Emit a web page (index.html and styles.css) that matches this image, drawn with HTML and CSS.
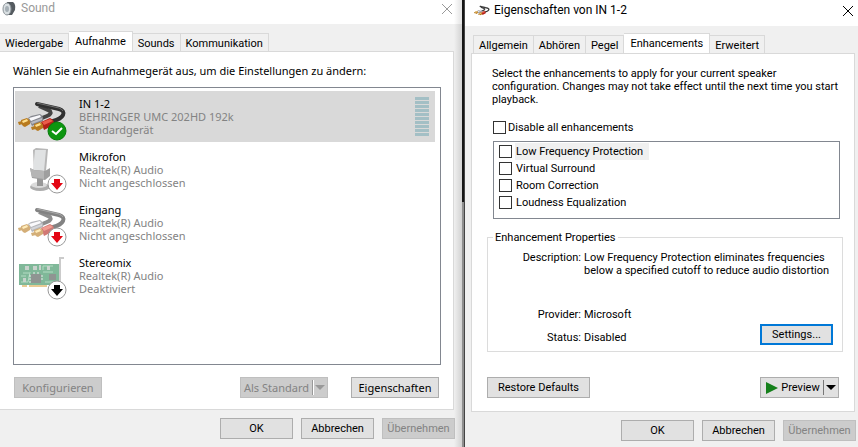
FILE: index.html
```html
<!DOCTYPE html>
<html lang="de">

<head>
    <meta charset="UTF-8">
    <meta name="viewport" content="width=device-width, initial-scale=1.0">
    <title>Sound</title>
    <link rel="stylesheet" href="styles.css">
</head>

<body>
    <svg class="symbols" aria-hidden="true">
        <symbol id="cable" viewBox="0 0 52 51">
            <path d="M24 15 L35 20 Q37 23 32 25 L27 27" fill="none" stroke="#444" stroke-width="4" />
            <path d="M22 13 L44 18 Q50 20 48 24 Q46 28 38 30" fill="none" stroke="#303030" stroke-width="4" stroke-linecap="round" />
            <path d="M22 12 L44 17 Q47 18 48 20" fill="none" stroke="#707070" />
            <path d="M13 27 L16 25 L25 23 Q29 25 28 30 L17 35 Z" fill="#85878e" />
            <path d="M14 27 L25 24 L26 26 L16 30 Z" fill="#f8f8fb" />
            <path d="M16 31 L27 27 L27 29 L17 33 Z" fill="#b9bbc2" />
            <path d="M3 31 L7 30 L8 33 L4 34 Z" fill="#b57b20" />
            <path d="M6 29 L12 27 Q16 29 15 33 L10 36 Q6 35 6 29 Z" fill="#b87a1e" />
            <path d="M7 30 L12 28 L13 30 L8 32 Z" fill="#ffe08c" />
            <path d="M26 31 L35 27 Q40 29 39 34 L29 39 Z" fill="#b32018" />
            <path d="M27 31 L35 28 L38 30 L29 34 Z" fill="#ea5c4a" />
            <path d="M16 36 L20 35 L21 38 L17 39 Z" fill="#b57b20" />
            <path d="M19 33 L25 31 Q29 33 28 37 L23 40 Q19 39 19 33 Z" fill="#b87a1e" />
            <path d="M20 34 L25 32 L26 34 L21 36 Z" fill="#ffe08c" />
        </symbol>
        <symbol id="microphone" viewBox="0 0 52 51">
            <ellipse cx="25" cy="43" rx="10" ry="4" fill="#777" />
            <ellipse cx="24" cy="41" rx="8" ry="3" fill="#c4c4c4" />
            <path d="M22 34 H28 V42 H22 Z" fill="#555" />
            <path d="M18 6 L21 4 L33 5 L31 27 L19 28 Z" fill="#888" />
            <path d="M20 6 L31 6 L29 27 L18 26 Z" fill="#cdcfd1" />
            <path d="M15 24 L19 26 L30 27 L35 24 V32 L30 36 L17 34 Z" fill="#606060" />
            <path d="M15 24 L19 26 L29 27 V35 L17 33 Z" fill="#858585" />
        </symbol>
        <symbol id="card" viewBox="0 0 52 51">
            <path d="M45 34 V8 H49" fill="none" stroke="#aaa" stroke-width="2" />
            <path d="M7 34 H12 V37 H7 Z M14 34 H32 V37 H14 Z" fill="#d9a94e" />
            <path d="M4 14 H44 V35 H4 Z" fill="#2d8a56" />
            <path d="M6 32 H13 L15 22 M8 23 H14 M28 22 H38 M30 32 H38 M28 20 V16 H38 M6 26 H11" fill="none" stroke="#83c59d" />
            <path d="M16 24 H26 V33 H16 Z M34 24 H41 V30 H34 Z" fill="#454f4a" />
            <path d="M10 16 H14 V20 H10 Z M18 16 H22 V20 H18 Z M24 15 H26 V20 H24 Z M32 16 H35 V20 H32 Z M8 28 H11 V32 H8 Z" fill="#a5b5ab" />
            <path d="M16 26 H14 M16 29 H14 M16 32 H14 M26 26 H28 M26 29 H28 M19 24 V22 M23 24 V22" stroke="#ddd" />
        </symbol>
        <symbol id="ok" viewBox="0 0 20 20">
            <circle cx="10" cy="10" r="9" fill="#0c9610" stroke="#087b0b" />
            <path d="M5 10 L9 13 L15 7" fill="none" stroke="#fff" stroke-width="2" />
        </symbol>
        <symbol id="down" viewBox="0 0 20 20">
            <circle cx="10" cy="10" r="9" fill="#fff" stroke="#999" />
            <path d="M7 5 H13 V9 H16 L10 16 L4 9 H7 Z" fill="currentColor" />
        </symbol>
        <symbol id="close" viewBox="0 0 10 10">
            <path d="M0 0 L10 10 M10 0 L0 10" stroke="currentColor" />
        </symbol>
    </svg>

    <div class="desktop">
        <section class="window sound">
            <header class="title-bar">
                <svg class="title-icon" viewBox="0 0 14 15">
                    <path d="M5 1 L11 1 Q14 3 13 9 L10 14 L5 14 Z" fill="#555b60" />
                    <ellipse cx="5" cy="8" rx="4" ry="6" fill="#d9dfe2" stroke="#8a9297" />
                    <ellipse cx="5" cy="8" rx="2" ry="3" fill="#a5afb5" />
                </svg>
                <h1>Sound</h1>
                <button class="close" aria-label="Schließen"><svg><use href="#close" /></svg></button>
            </header>
            <nav class="tabs">
                <button>Wiedergabe</button>
                <button class="active">Aufnahme</button>
                <button>Sounds</button>
                <button>Kommunikation</button>
            </nav>
            <main class="panel">
                <p class="intro">Wählen Sie ein Aufnahmegerät aus, um die Einstellungen zu ändern:</p>
                <ul class="devices">
                    <li class="selected">
                        <div class="device-icon">
                            <svg class="picture"><use href="#cable" /></svg>
                            <svg class="badge"><use href="#ok" /></svg>
                        </div>
                        <div class="device-text">
                            <h2>IN 1-2</h2>
                            <p>BEHRINGER UMC 202HD 192k</p>
                            <p>Standardgerät</p>
                        </div>
                        <div class="meter"></div>
                    </li>
                    <li>
                        <div class="device-icon">
                            <svg class="picture faded"><use href="#microphone" /></svg>
                            <svg class="badge red"><use href="#down" /></svg>
                        </div>
                        <div class="device-text">
                            <h2>Mikrofon</h2>
                            <p>Realtek(R) Audio</p>
                            <p>Nicht angeschlossen</p>
                        </div>
                    </li>
                    <li>
                        <div class="device-icon">
                            <svg class="picture faded"><use href="#cable" /></svg>
                            <svg class="badge red"><use href="#down" /></svg>
                        </div>
                        <div class="device-text">
                            <h2>Eingang</h2>
                            <p>Realtek(R) Audio</p>
                            <p>Nicht angeschlossen</p>
                        </div>
                    </li>
                    <li>
                        <div class="device-icon">
                            <svg class="picture faded"><use href="#card" /></svg>
                            <svg class="badge"><use href="#down" /></svg>
                        </div>
                        <div class="device-text">
                            <h2>Stereomix</h2>
                            <p>Realtek(R) Audio</p>
                            <p>Deaktiviert</p>
                        </div>
                    </li>
                </ul>
                <div class="actions">
                    <button class="but wide" disabled>Konfigurieren</button>
                    <button class="but wide split" disabled>Als Standard<span class="arrow"></span></button>
                    <button class="but wide">Eigenschaften</button>
                </div>
            </main>
            <footer class="bottom">
                <button class="but">OK</button>
                <button class="but">Abbrechen</button>
                <button class="but" disabled>Übernehmen</button>
            </footer>
        </section>

        <div class="backdrop"></div>

        <section class="window properties">
            <header class="title-bar">
                <svg class="title-icon"><use href="#cable" /></svg>
                <h1>Eigenschaften von IN 1-2</h1>
                <button class="close" aria-label="Schließen"><svg><use href="#close" /></svg></button>
            </header>
            <nav class="tabs">
                <button>Allgemein</button>
                <button>Abhören</button>
                <button>Pegel</button>
                <button class="active">Enhancements</button>
                <button>Erweitert</button>
            </nav>
            <main class="panel">
                <p class="intro">Select the enhancements to apply for your current speaker configuration. Changes may not take effect until the next time you start playback.</p>
                <label class="check"><input type="checkbox"><span>Disable all enhancements</span></label>
                <div class="effects">
                    <label class="check focused"><input type="checkbox"><span>Low Frequency Protection</span></label>
                    <label class="check"><input type="checkbox"><span>Virtual Surround</span></label>
                    <label class="check"><input type="checkbox"><span>Room Correction</span></label>
                    <label class="check"><input type="checkbox"><span>Loudness Equalization</span></label>
                </div>
                <fieldset>
                    <legend>Enhancement Properties</legend>
                    <div class="details">
                        <span class="name">Description:</span>
                        <span class="description">Low Frequency Protection eliminates frequencies below a specified cutoff to reduce audio distortion</span>
                        <span class="name">Provider:</span>
                        <span>Microsoft</span>
                        <span class="name">Status:</span>
                        <span>Disabled</span>
                        <button class="but settings">Settings...</button>
                    </div>
                </fieldset>
                <div class="actions">
                    <button class="but restore">Restore Defaults</button>
                    <button class="but split preview"><svg class="play" viewBox="0 0 12 12"><path d="M0 0 L12 6 L0 12 Z" fill="#15801b" /></svg>Preview<span class="arrow"></span></button>
                </div>
            </main>
            <footer class="bottom">
                <button class="but">OK</button>
                <button class="but">Abbrechen</button>
                <button class="but" disabled>Übernehmen</button>
            </footer>
        </section>
    </div>
</body>

</html>
```
FILE: styles.css
```css
* {
    box-sizing: border-box;
    padding: 0;
    margin: 0;
}

body {
    font-family: "Noto Sans", "Open Sans", sans-serif;
    font-size: 11px;
    line-height: 13px;
    color: #000;
}

h1,
h2 {
    font-size: inherit;
    font-weight: normal;
}

button {
    font: inherit;
    color: inherit;
    white-space: nowrap;
}

.title-bar,
.tabs,
.bottom,
.properties {
    font-family: Roboto, Tahoma, sans-serif;
}

.symbols {
    display: none;
}

.desktop {
    display: grid;
    grid-template-columns: 462fr 3px 393fr;
    min-height: 100vh;
}

.window {
    display: flex;
    flex-direction: column;
    background-color: #f0f0f0;
    min-width: 0;
}

.sound {
    background-image: linear-gradient(to left, #d2d2d2, #f0f0f0 8px);
}

.backdrop {
    background: linear-gradient(#151515 202px, #8e8e8e 202px);
    border-right: 1px solid #444;
}

/* Title bar */
.title-bar {
    display: flex;
    align-items: center;
    background-color: #fff;
}

.title-bar h1 {
    font-size: 12px;
    flex: 1;
}

.close {
    border: none;
    background: none;
    width: 10px;
    height: 10px;
}

.close svg {
    display: block;
    width: 10px;
    height: 10px;
}

.sound .title-bar {
    height: 24px;
    padding: 0 10px 7px 2px;
    gap: 5px;
    background-image: linear-gradient(to left, #e2e2e2, #fff 8px);
}

.sound .title-bar h1,
.sound .close {
    color: #999;
}

.sound .title-icon {
    width: 14px;
    height: 15px;
}

.properties .title-bar {
    height: 26px;
    padding: 0 5px 5px 8px;
    gap: 4px;
}

.properties .title-icon {
    width: 17px;
    height: 17px;
}

/* Tabs */
.tabs {
    display: flex;
    align-items: flex-end;
    margin-top: 7px;
}

.tabs button {
    height: 18px;
    border: 1px solid #d9d9d9;
    border-bottom: none;
    border-left: none;
    background-color: #f0f0f0;
    padding: 1px 5px 0;
}

.tabs .active {
    height: 21px;
    margin-bottom: -1px;
    padding: 0 6px 2px;
    background-color: #fff;
}

.properties .tabs {
    padding-left: 8px;
}

.properties .tabs button:first-child {
    border-left: 1px solid #d9d9d9;
}

.panel {
    flex: 1;
    display: flex;
    flex-direction: column;
    background-color: #fff;
    border: 1px solid #d9d9d9;
}

.sound .panel {
    margin-right: 8px;
    border-left: none;
    padding: 12px 12px 11px 13px;
}

.properties .panel {
    margin: 0 3px 0 6px;
    padding: 13px 11px 13px 15px;
}

/* Devices */
.devices {
    flex: 1;
    margin: 10px 0 12px;
    border: 1px solid #828790;
    padding: 3px 5px 3px 1px;
    list-style: none;
}

.devices li {
    display: flex;
    align-items: center;
    height: 51px;
    margin-bottom: 2px;
    padding-right: 6px;
}

.devices .selected {
    background-color: #d9d9d9;
}

.device-icon {
    position: relative;
    width: 52px;
    height: 51px;
    margin-right: 12px;
}

.picture {
    width: 52px;
    height: 51px;
}

.faded {
    opacity: 0.6;
}

.badge {
    position: absolute;
    right: 0;
    bottom: 1px;
    width: 20px;
    height: 20px;
}

.red {
    color: #e30613;
}

.device-text {
    flex: 1;
}

.device-text p {
    color: #838383;
}

.meter {
    width: 14px;
    height: 39px;
    background: repeating-linear-gradient(#a3bfc5 0 3px, #d9d9d9 3px 4px);
}

/* Buttons */
.but {
    width: 73px;
    height: 21px;
    border: 1px solid #adadad;
    background-color: #e1e1e1;
}

.but:disabled {
    color: #838383;
    background-color: #ccc;
    border-color: #bfbfbf;
}

.wide {
    width: 88px;
}

.actions {
    display: flex;
}

.sound .actions {
    padding: 0 2px 0 1px;
    gap: 23px;
}

.sound .actions .split {
    margin-left: auto;
}

.split {
    display: flex;
    align-items: center;
    justify-content: space-between;
    padding: 0 2px 0 3px;
}

.arrow {
    display: flex;
    align-items: center;
    height: 15px;
    border-left: 1px solid #777;
    padding-left: 2px;
}

.arrow::after {
    content: "";
    border: 5px solid transparent;
    border-top-color: currentColor;
    border-bottom: none;
}

.split:disabled .arrow {
    color: #999;
    border-left-color: #999;
    box-shadow: inset 1px 0 #fff;
}

.bottom {
    display: flex;
    justify-content: flex-end;
    gap: 8px;
    padding: 8px 7px 8px 0;
}

.properties .bottom {
    padding: 8px 2px 6px 0;
}

/* Enhancements */
.properties .intro {
    padding-left: 5px;
}

.check {
    display: flex;
    align-items: center;
    gap: 2px;
}

.check input {
    appearance: none;
    width: 13px;
    height: 13px;
    border: 1px solid #333;
    background-color: #fff;
}

.properties .intro + .check {
    margin: 15px 0 7px 6px;
}

.effects {
    height: 78px;
    margin: 0 3px 12px 6px;
    border: 1px solid #828790;
    padding: 1px 5px;
}

.effects .check {
    height: 17px;
    gap: 3px;
}

.effects span {
    line-height: 17px;
    padding: 0 6px 0 1px;
}

.focused span {
    background-color: #f0f0f0;
}

fieldset {
    border: 1px solid #dcdcdc;
    padding: 7px 9px 6px 0;
}

legend {
    margin-left: 5px;
    padding: 0 2px;
}

.details {
    display: grid;
    grid-template-columns: 93px 1fr 73px;
    grid-template-rows: 57px 13px 24px;
    column-gap: 3px;
}

.name {
    grid-column: 1;
    text-align: right;
}

.description {
    grid-column: 2 / 4;
}

.details .name:nth-of-type(5),
.details .name:nth-of-type(5) + span {
    padding-top: 10px;
}

.settings {
    grid-column: 3;
    grid-row: 2 / 4;
    align-self: end;
    border: 2px solid #0078d7;
}

.properties .actions {
    justify-content: space-between;
    margin-top: auto;
    padding: 0 4px 0 0;
}

.restore {
    width: 103px;
}

.preview {
    width: 79px;
    padding-left: 5px;
}

.play {
    width: 12px;
    height: 12px;
}
```
